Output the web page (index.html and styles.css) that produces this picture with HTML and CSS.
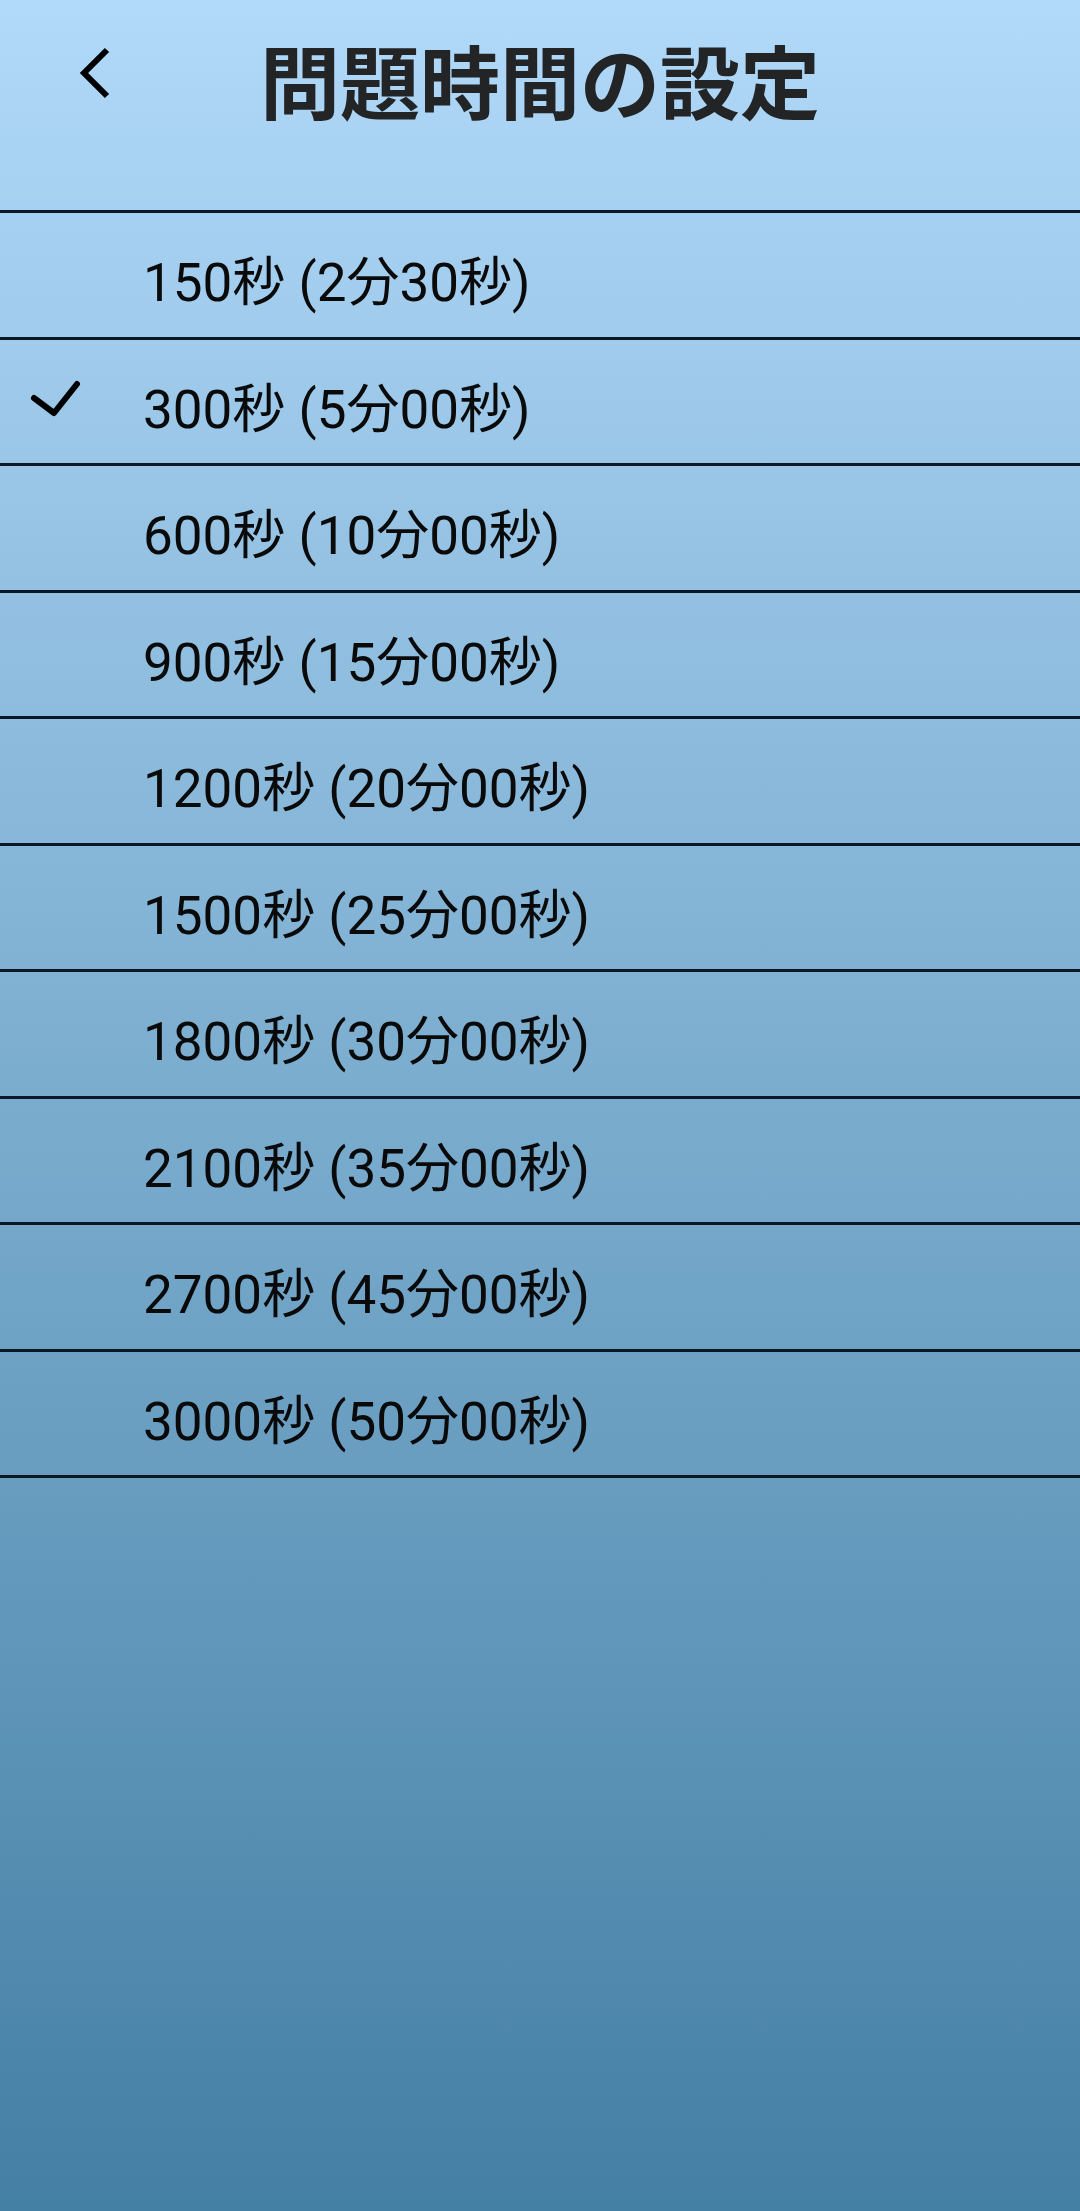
FILE: index.html
```html
<!DOCTYPE html>
<html lang="ja">
<head>
<meta charset="utf-8">
<link rel="stylesheet" href="styles.css">
</head>
<body>
<div class="screen">
  <header class="topbar">
    <div class="back">
      <svg class="back-icon" width="40" height="60" viewBox="0 0 40 60">
        <polyline points="29,5 6,28 29,51" fill="none" stroke="#000" stroke-width="6" stroke-linejoin="miter"/>
      </svg>
    </div>
    <h1 class="title">問題時間の設定</h1>
    <div></div>
  </header>
  <ul class="list">
    <li class="row"><span class="mark"></span><span class="label">150秒 (2分30秒)</span></li>
    <li class="row"><span class="mark"><svg width="52" height="38" viewBox="0 0 52 38"><polyline points="5,18 25,33 48,4" fill="none" stroke="#000" stroke-width="6" stroke-linecap="round" stroke-linejoin="round"/></svg></span><span class="label">300秒 (5分00秒)</span></li>
    <li class="row"><span class="mark"></span><span class="label">600秒 (10分00秒)</span></li>
    <li class="row"><span class="mark"></span><span class="label">900秒 (15分00秒)</span></li>
    <li class="row"><span class="mark"></span><span class="label">1200秒 (20分00秒)</span></li>
    <li class="row"><span class="mark"></span><span class="label">1500秒 (25分00秒)</span></li>
    <li class="row"><span class="mark"></span><span class="label">1800秒 (30分00秒)</span></li>
    <li class="row"><span class="mark"></span><span class="label">2100秒 (35分00秒)</span></li>
    <li class="row"><span class="mark"></span><span class="label">2700秒 (45分00秒)</span></li>
    <li class="row"><span class="mark"></span><span class="label">3000秒 (50分00秒)</span></li>
  </ul>
</div>
</body>
</html>
```

FILE: styles.css
```css
html, body {
  margin: 0;
  padding: 0;
}
body {
  width: 1080px;
  height: 2211px;
  overflow: hidden;
  font-family: Roboto, "Noto Sans CJK JP", sans-serif;
}
.screen {
  width: 1080px;
  height: 2211px;
  background: linear-gradient(to bottom, #b1d9f9 0%, #7aacce 50%, #447fa4 100%);
}
.topbar {
  height: 210px;
  box-sizing: border-box;
  display: grid;
  grid-template-columns: 1fr auto 1fr;
  align-items: start;
}
.back {
  padding-top: 45px;
  padding-left: 78px;
}
.back-icon {
  display: block;
}
.title {
  margin: 0;
  padding-top: 38px;
  font-family: "Noto Sans CJK JP", sans-serif;
  font-weight: 700;
  font-size: 80px;
  line-height: 80px;
  color: #222426;
  letter-spacing: 0;
}
.list {
  list-style: none;
  margin: 0;
  padding: 0;
  border-top: 3px solid #0d1826;
}
.row {
  height: 126.5px;
  box-sizing: border-box;
  border-bottom: 3px solid #0d1826;
  display: grid;
  grid-template-columns: 143px 1fr;
  align-items: center;
}
.mark {
  display: flex;
  padding-left: 29px;
  padding-bottom: 4px;
}
.mark svg {
  display: block;
}
.label {
  font-size: 53px;
  color: #0a0a0a;
  padding-top: 19px;
  line-height: 1.2;
  white-space: nowrap;
}
```
